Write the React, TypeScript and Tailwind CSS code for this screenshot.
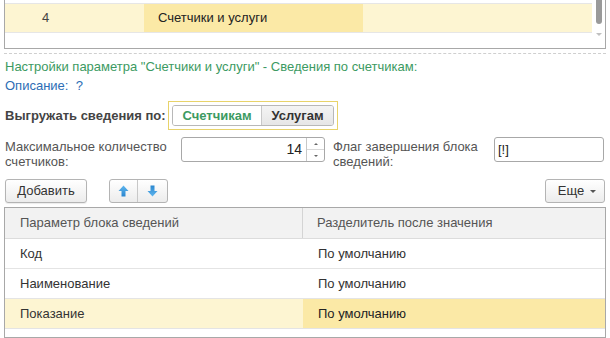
import React from 'react';

const font = { fontFamily: '"Liberation Sans", Arial, sans-serif' };

function ArrowIcon({ down }: { down?: boolean }) {
  return (
    <svg width="11" height="12" viewBox="0 0 11 12" className={down ? 'rotate-180' : ''}>
      <defs>
        <linearGradient id="ag" x1="0" y1="0" x2="0" y2="1">
          <stop offset="0" stopColor="#5fb6ee" />
          <stop offset="1" stopColor="#2a86cf" />
        </linearGradient>
      </defs>
      <path d="M5.5 0.5 L10.5 6 L7.5 6 L7.5 11.5 L3.5 11.5 L3.5 6 L0.5 6 Z" fill="url(#ag)" />
    </svg>
  );
}

const rows = [
  { name: 'Код', sep: 'По умолчанию' },
  { name: 'Наименование', sep: 'По умолчанию' },
  { name: 'Показание', sep: 'По умолчанию', active: true },
];

export default function App() {
  return (
    <div className="w-[610px] h-[338px] bg-white overflow-hidden text-[13px] text-[#333]" style={font}>
      {/* Top list */}
      <div className="mx-[4px] h-[49px] border-x border-b border-[#a8a8a8] pt-[3px] flex">
        <div className="flex-1 h-[30px] flex border-y border-[#e6e6e6]">
          <div className="w-[139px] bg-[#fdf5d2] pl-[37px] flex items-center text-[#444]">4</div>
          <div className="w-[219px] bg-[#fbe9a6] pl-[14px] flex items-center text-[#222]">Счетчики и услуги</div>
          <div className="flex-1 bg-[#fdf5d2]" />
        </div>
        <div className="w-[13px] flex flex-col items-center">
          <div className="w-[6px] h-[24px] bg-[#9a9a9a] rounded-b-[3px] -mt-[3px]" />
          <div className="mt-[9px] w-0 h-0 border-x-[3px] border-x-transparent border-t-[3px] border-t-[#c0c0c0]" />
        </div>
      </div>
      <div className="mx-[4px] mt-[4px] border-t border-dashed border-[#cfcfcf]" />

      {/* Titles */}
      <div className="mt-[5px] ml-[5px] leading-[16px] text-[#3c9a62]">
        Настройки параметра "Счетчики и услуги" - Сведения по счетчикам:
      </div>
      <div className="mt-[3px] ml-[5px] leading-[16px] text-[#2d6db5]">
        Описание:&nbsp; ?
      </div>

      {/* Toggle */}
      <div className="mt-[7px] ml-[5px] flex items-center h-[29px]">
        <span className="font-bold text-[#444] w-[163px]">Выгружать сведения по:</span>
        <div className="h-[29px] border border-[#e8d36a] p-[3px] flex">
          <div className="flex border border-[#b8b8b8] rounded-[3px] overflow-hidden">
            <div className="w-[89px] bg-white flex items-center justify-center text-[#3c9a62] font-bold border-r border-[#c8c8c8]">Счетчикам</div>
            <div className="w-[71px] bg-gradient-to-b from-[#f4f4f4] to-[#e6e6e6] flex items-center justify-center font-bold text-[#333]">Услугам</div>
          </div>
        </div>
      </div>

      {/* Fields */}
      <div className="mt-[7px] ml-[5px] flex items-start">
        <div className="w-[176px] leading-[15px] text-[#555] pt-[2px]">
          Максимальное количество<br />счетчиков:
        </div>
        <div className="w-[144px] h-[25px] border border-[#a8a8a8] rounded-[3px] flex">
          <div className="flex-1 flex items-center justify-end pr-[4px] text-[#222] text-[14px]">14</div>
          <div className="w-[18px] border-l border-[#c8c8c8] flex flex-col">
            <div className="flex-1 flex items-center justify-center border-b border-[#d8d8d8]">
              <div className="w-0 h-0 border-x-[2px] border-x-transparent border-b-[2px] border-b-[#666]" />
            </div>
            <div className="flex-1 flex items-center justify-center">
              <div className="w-0 h-0 border-x-[2px] border-x-transparent border-t-[2px] border-t-[#666]" />
            </div>
          </div>
        </div>
        <div className="ml-[8px] w-[161px] leading-[15px] text-[#555] pt-[2px]">
          Флаг завершения блока<br />сведений:
        </div>
        <div className="w-[110px] h-[25px] border border-[#a8a8a8] rounded-[3px] flex items-center pl-[3px] text-[#222]">
          [!]
        </div>
      </div>

      {/* Command bar */}
      <div className="mt-[10px] mx-[5px] flex items-center h-[24px]">
        <button className="w-[82px] h-[24px] border border-[#b4b4b4] rounded-[3px] bg-gradient-to-b from-white to-[#ececec] text-[#333] shadow-[0_1px_1px_rgba(0,0,0,0.08)]">
          Добавить
        </button>
        <div className="ml-[22px] flex h-[24px] border border-[#b4b4b4] rounded-[3px] overflow-hidden bg-gradient-to-b from-white to-[#ececec]">
          <div className="w-[28px] flex items-center justify-center border-r border-[#c8c8c8]"><ArrowIcon /></div>
          <div className="w-[29px] flex items-center justify-center"><ArrowIcon down /></div>
        </div>
        <div className="flex-1" />
        <button className="w-[60px] h-[24px] border border-[#b4b4b4] rounded-[3px] bg-gradient-to-b from-white to-[#ececec] text-[#333] flex items-center justify-center gap-[6px] pl-[4px]">
          Еще
          <span className="w-0 h-0 border-x-[3px] border-x-transparent border-t-[3px] border-t-[#555]" />
        </button>
      </div>

      {/* Table */}
      <div className="mt-[4px] mx-[4px] h-[131px] border border-[#a8a8a8]">
        <div className="flex h-[31px] bg-[#f2f2f2] border-b border-[#dcdcdc] text-[#555]">
          <div className="w-[298px] pl-[15px] flex items-center border-r border-[#d4d4d4]">Параметр блока сведений</div>
          <div className="flex-1 pl-[14px] flex items-center">Разделитель после значения</div>
        </div>
        {rows.map((r) => (
          <div key={r.name} className="flex h-[30px] border-b border-[#e4e4e4] text-[#333]">
            <div className={`w-[298px] pl-[15px] flex items-center ${r.active ? 'bg-[#fdf5d2]' : ''}`}>{r.name}</div>
            <div className={`flex-1 pl-[15px] flex items-center ${r.active ? 'bg-[#fbe9a6] text-[#222]' : ''}`}>{r.sep}</div>
          </div>
        ))}
      </div>
    </div>
  );
}
